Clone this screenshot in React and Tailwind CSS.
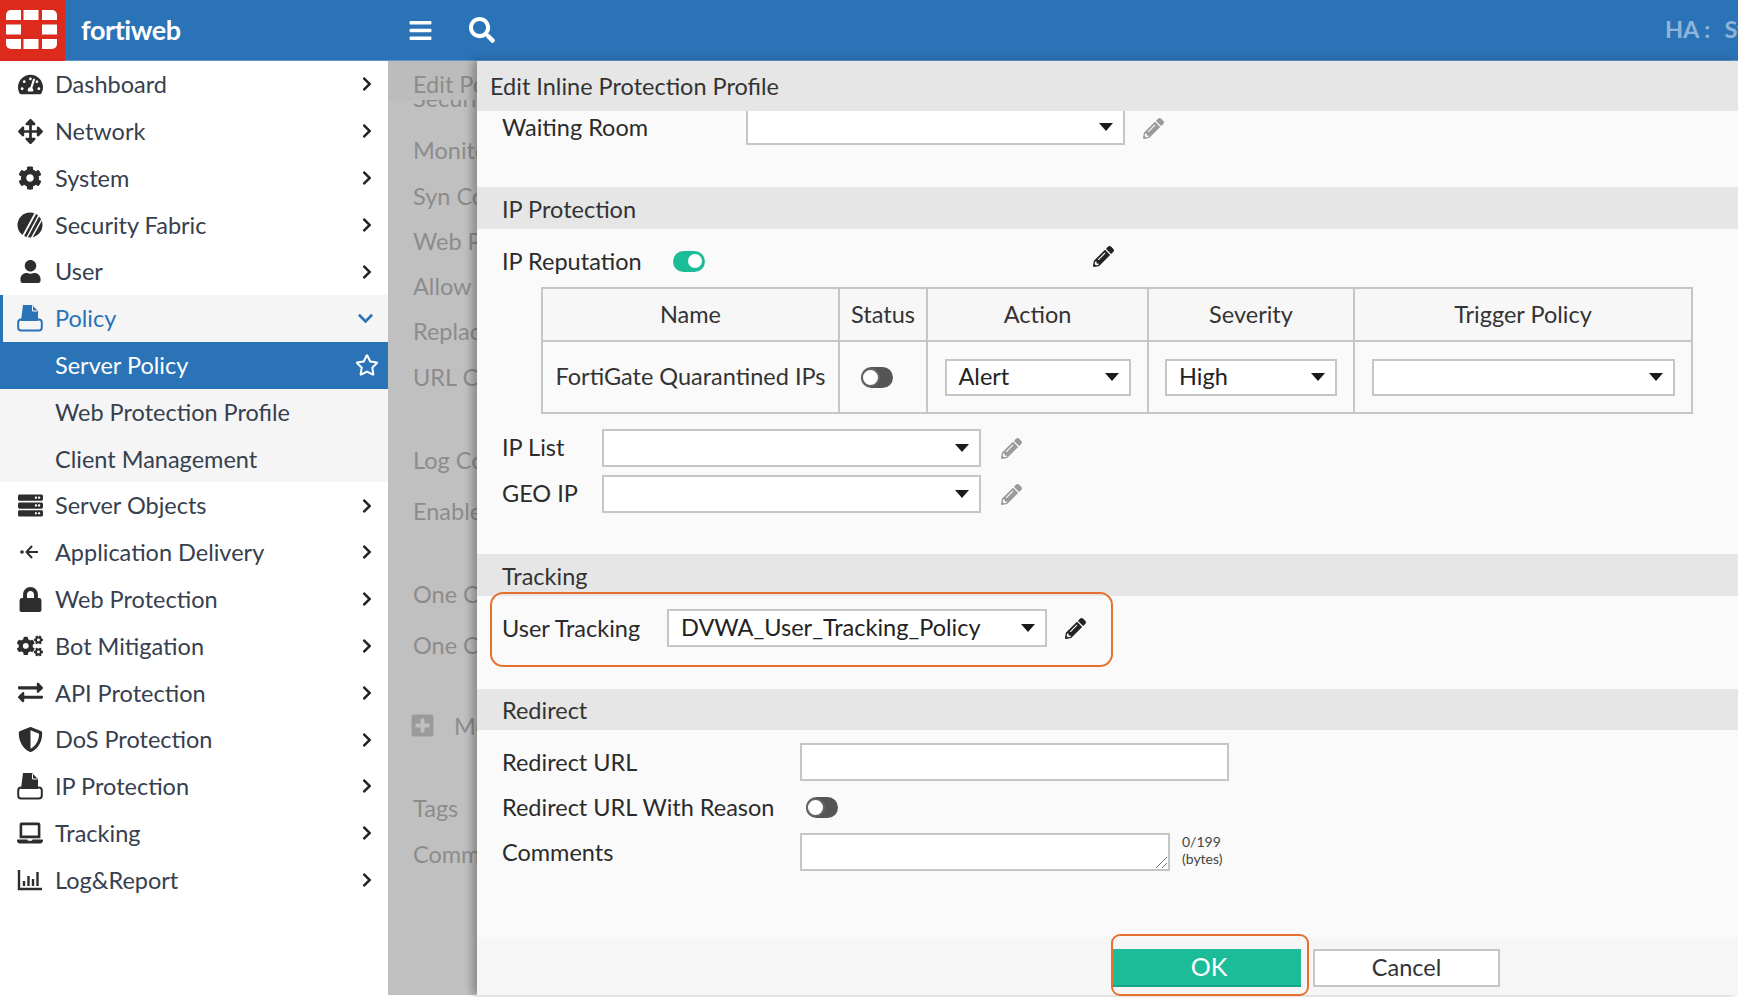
import React from "react";
import {
  FaTachometerAlt, FaArrowsAlt, FaCog, FaUser, FaServer, FaLock, FaCogs, FaExchangeAlt, FaShieldAlt, FaLaptop,
  FaChevronRight, FaChevronDown, FaRegStar, FaBars, FaSearch, FaPencilAlt, FaPlusSquare,
} from "react-icons/fa";

const Logo = () => (
  <svg width="65" height="61" viewBox="0 0 65 61" className="block">
    <path d="M11 10H21V20H6V15a5 5 0 0 1 5-5Z" fill="#fff" />
    <rect x="23.5" y="10" width="15" height="10" fill="#fff" />
    <path d="M42 10H52a5 5 0 0 1 5 5V20H42Z" fill="#fff" />
    <rect x="6" y="24.5" width="15" height="10" fill="#fff" />
    <rect x="42" y="24.5" width="15" height="10" fill="#fff" />
    <path d="M6 39H21V49H11a5 5 0 0 1-5-5Z" fill="#fff" />
    <rect x="23.5" y="39" width="15" height="10" fill="#fff" />
    <path d="M42 39H57V44a5 5 0 0 1-5 5H42Z" fill="#fff" />
  </svg>
);

const FabricIcon = () => (
  <svg width="26" height="26" viewBox="0 0 26 26">
    <circle cx="13" cy="13" r="12.500" fill="#2d2d2d" />
    <path d="M18.500 1 5.500 25" stroke="#fff" strokeWidth="1.800" fill="none" />
    <path d="M22 3 10 25.500" stroke="#fff" strokeWidth="1.500" fill="none" />
    <path d="M25 7 14.500 26" stroke="#fff" strokeWidth="1.500" fill="none" />
  </svg>
);

const PolicyIcon = ({ color }) => (
  <svg width="26" height="28" viewBox="0 0 26 28">
    <path d="M6 1H15L21 7V17H4Z" fill={color} />
    <path d="M15.500 2V7H20.500" stroke="#fff" strokeWidth="1" fill="none" />
    <rect x="1.200" y="15.500" width="23.600" height="11" rx="3" fill="none" stroke={color} strokeWidth="2" />
    <path d="M8 15.500H20" stroke={color} strokeWidth="3" />
  </svg>
);

const DeliveryIcon = () => (
  <svg width="26" height="20" viewBox="0 0 26 20">
    <circle cx="5" cy="10" r="1.800" fill="#2d2d2d" />
    <path d="M21 10H10M15 4 9.500 10l5.500 6" stroke="#2d2d2d" strokeWidth="2" fill="none" />
  </svg>
);

const LogIcon = () => (
  <svg width="26" height="24" viewBox="0 0 26 24">
    <path d="M2 2V21H25" stroke="#2d2d2d" strokeWidth="2.400" fill="none" />
    <path d="M7 18V13M11.500 18V8M16 18V11M20.500 18V4" stroke="#2d2d2d" strokeWidth="2.400" fill="none" />
  </svg>
);

const dark = "#2d2d2d";
const menuTop = [
  ["Dashboard", <FaTachometerAlt size={25} color={dark} />],
  ["Network", <FaArrowsAlt size={25} color={dark} />],
  ["System", <FaCog size={24} color={dark} />],
  ["Security Fabric", <FabricIcon />],
  ["User", <FaUser size={23} color={dark} />],
];
const menuBottom = [
  ["Server Objects", <FaServer size={25} color={dark} />],
  ["Application Delivery", <DeliveryIcon />],
  ["Web Protection", <FaLock size={25} color={dark} />],
  ["Bot Mitigation", <FaCogs size={26} color={dark} />],
  ["API Protection", <FaExchangeAlt size={25} color={dark} />],
  ["DoS Protection", <FaShieldAlt size={25} color={dark} />],
  ["IP Protection", <PolicyIcon color={dark} />],
  ["Tracking", <FaLaptop size={26} color={dark} />],
  ["Log&Report", <LogIcon />],
];

const MenuRow = ({ label, icon }) => (
  <div className="flex h-[46.8px] items-center text-[#36404e]">
    <span className="flex w-[55px] shrink-0 justify-center pl-[10px] pr-[5px]">{icon}</span>
    <span className="flex-1 pt-[1px]">{label}</span>
    <FaChevronRight size={16} color="#222" className="mr-[13px]" />
  </div>
);

const SubRow = ({ label }) => (
  <div className="flex h-[46.8px] items-center bg-[#f5f5f5] pt-[1px] pl-[55px] text-[#36404e]">{label}</div>
);

const Sidebar = () => (
  <aside className="w-[388px] shrink-0 bg-white">
    {menuTop.map(([l, i]) => <MenuRow key={l} label={l} icon={i} />)}
    <div className="flex h-[46.8px] items-center border-l-[3px] border-[#2a73b7] bg-[#f5f5f5] text-[#2a73b7]">
      <span className="flex w-[52px] shrink-0 justify-center pl-[7px] pr-[5px]"><PolicyIcon color="#2a73b7" /></span>
      <span className="flex-1 pt-[1px]">Policy</span>
      <FaChevronDown size={17} color="#2a73b7" className="mr-[14px]" />
    </div>
    <div className="flex h-[46.8px] items-center bg-[#2a73b7] pl-[55px] text-white">
      <span className="flex-1">Server Policy</span>
      <FaRegStar size={24} color="#fff" className="mr-[9px]" />
    </div>
    <SubRow label="Web Protection Profile" />
    <SubRow label="Client Management" />
    {menuBottom.map(([l, i]) => <MenuRow key={l} label={l} icon={i} />)}
  </aside>
);

const backdropRows = [
  ["Monitor Mode", "h-[46px]"],
  ["Syn Cookie", "h-[45px]"],
  ["Web Protection", "h-[45px]"],
  ["Allow Method", "h-[45px]"],
  ["Replacemsg", "h-[46px]"],
  ["URL Cache", "h-[83px]"],
  ["Log Cookie", "h-[51px]"],
  ["Enable", "h-[83px]"],
  ["One Click", "h-[51px]"],
  ["One Click", "h-[81px]"],
];

const Backdrop = () => (
  <div className="w-[89px] shrink-0 overflow-hidden bg-[#c0c0c0] pl-[25px] leading-[30px] whitespace-nowrap text-[#8c8c8c]">
    <div className="-ml-[25px] h-[39px] bg-[#bcbcbc] pt-[8px] pl-[25px]">Edit Policy</div>
    <div className="h-[10px] overflow-hidden"><div className="-mt-[17px]">Security</div></div>
    <div className="h-[25px]" />
    {backdropRows.map(([t, h], i) => <div key={i} className={h}>{t}</div>)}
    <div className="flex h-[82px] items-start gap-[19px]">
      <FaPlusSquare size={25} color="#9a9a9a" className="mt-[2px] -ml-[3px] shrink-0" />
      <span>Members</span>
    </div>
    <div className="h-[46px]">Tags</div>
    <div>Comments</div>
  </div>
);

const Select = ({ value, className }) => (
  <div className={`flex items-center justify-between bg-white pr-[10px] pl-[12px] text-[#222] ${className}`}>
    <span>{value}</span>
    <svg width="14" height="8" viewBox="0 0 14 8" className="shrink-0"><path d="M0 0H14L7 8Z" fill="#1a1a1a" /></svg>
  </div>
);

const Toggle = ({ on }) => on ? (
  <div className="flex h-[21px] w-[32px] items-center justify-end rounded-full bg-[#1dbc98] pr-[1px]">
    <div className="h-[18px] w-[18px] rounded-full border-2 border-[#1dbc98] bg-white" />
  </div>
) : (
  <div className="flex h-[21px] w-[32px] items-center justify-start rounded-full bg-[#555]">
    <div className="h-[19px] w-[19px] rounded-full border-2 border-[#666] bg-white" />
  </div>
);

const Section = ({ title, className }) => (
  <div className={`flex items-center bg-[#e6e6e6] pl-[25px] text-[#333] ${className}`}>{title}</div>
);

const box = "border-2 border-[#c6c6c6]";
const tdb = "border-2 border-[#c6c6c6] p-0";

const Table = () => (
  <table className="ml-[64px] w-[1150px] table-fixed border-collapse border-2 border-[#c6c6c6] text-[#333]">
    <colgroup>
      <col className="w-[297px]" />
      <col className="w-[88px]" />
      <col className="w-[221px]" />
      <col className="w-[206px]" />
      <col className="w-[338px]" />
    </colgroup>
    <thead>
      <tr className="h-[53px] bg-[#f7f7f7] text-center">
        <th className={`${tdb} font-normal`}>Name</th>
        <th className={`${tdb} font-normal`}>Status</th>
        <th className={`${tdb} font-normal`}>Action</th>
        <th className={`${tdb} font-normal`}>Severity</th>
        <th className={`${tdb} font-normal`}>Trigger Policy</th>
      </tr>
    </thead>
    <tbody>
      <tr className="h-[72px]">
        <td className={`${tdb} text-center whitespace-nowrap`}>FortiGate Quarantined IPs</td>
        <td className={tdb}><div className="flex justify-center pr-[13px]"><Toggle /></div></td>
        <td className={tdb}><div className="flex justify-center"><Select value="Alert" className={`h-[37px] w-[186px] ${box}`} /></div></td>
        <td className={tdb}><div className="flex justify-center"><Select value="High" className={`h-[37px] w-[172px] ${box}`} /></div></td>
        <td className={tdb}><div className="flex justify-center"><Select value="" className={`h-[37px] w-[303px] ${box}`} /></div></td>
      </tr>
    </tbody>
  </table>
);

const Pencil = ({ gray }) => <FaPencilAlt size={21} color={gray ? "#9a9a9a" : "#222"} />;

const Modal = () => (
  <div className="flex min-w-0 flex-1 flex-col bg-[#fafafa] text-[#2b2b2b] shadow-[-5px_0_8px_rgba(0,0,0,0.28)]">
    <div className="flex h-[50px] shrink-0 items-center bg-[#e6e6e6] pt-[2px] pl-[13px] text-[#333]">Edit Inline Protection Profile</div>
    <div className="flex h-[76px] items-start pl-[25px]">
      <span className="w-[244px] leading-[32px]">Waiting Room</span>
      <Select value="" className="h-[34px] w-[379px] border-x-2 border-b-2 border-[#c6c6c6]" />
      <span className="mt-[7px] ml-[18px]"><Pencil gray /></span>
    </div>
    <Section title="IP Protection" className="h-[42px] pt-[3px]" />
    <div className="flex h-[58px] items-center pt-[6px] pl-[25px]">
      <span className="w-[171px] pt-[1px]">IP Reputation</span>
      <Toggle on />
      <span className="-mt-[10px] ml-[388px]"><Pencil /></span>
    </div>
    <Table />
    <div className="mt-[15px] flex h-[38px] items-center pl-[25px]">
      <span className="w-[100px]">IP List</span>
      <Select value="" className={`h-[38px] w-[379px] ${box}`} />
      <span className="ml-[20px]"><Pencil gray /></span>
    </div>
    <div className="mt-[8px] flex h-[38px] items-center pl-[25px]">
      <span className="w-[100px]">GEO IP</span>
      <Select value="" className={`h-[38px] w-[379px] ${box}`} />
      <span className="ml-[20px]"><Pencil gray /></span>
    </div>
    <Section title="Tracking" className="mt-[41px] h-[42px] pt-[3px]" />
    <div className="relative flex h-[93px] items-start pt-[13px] pl-[25px]">
      <span className="w-[165px] leading-[38px]">User Tracking</span>
      <Select value="DVWA_User_Tracking_Policy" className={`h-[38px] w-[380px] ${box}`} />
      <span className="mt-[9px] ml-[18px]"><Pencil /></span>
      <div className="absolute top-[-4px] left-[13px] h-[75px] w-[623px] rounded-[13px] border-[2.5px] border-[#e8702f]" />
    </div>
    <Section title="Redirect" className="h-[41px] pt-[2px]" />
    <div className="mt-[13px] flex h-[38px] items-center pl-[25px]">
      <span className="w-[298px] pt-[2px]">Redirect URL</span>
      <div className={`h-[38px] w-[429px] bg-white ${box}`} />
    </div>
    <div className="mt-[8px] flex h-[37px] items-center pl-[25px]">
      <span className="w-[304px] whitespace-nowrap">Redirect URL With Reason</span>
      <Toggle />
    </div>
    <div className="mt-[7px] flex h-[38px] items-start pl-[25px]">
      <span className="w-[298px] leading-[38px]">Comments</span>
      <div className={`relative h-[38px] w-[370px] bg-white ${box}`}>
        <svg width="14" height="14" viewBox="0 0 14 14" className="absolute right-0 bottom-0">
          <path d="M2 13 13 2M8 13 13 8" stroke="#777" strokeWidth="1" fill="none" />
        </svg>
      </div>
      <div className="ml-[12px] text-[14px] leading-[17px] text-[#444]">0/199<br />(bytes)</div>
    </div>
    <div className="mt-auto h-[58px] shrink-0 bg-[#f6f6f6] pt-[12px] pl-[636px]">
      <div className="relative flex gap-[12px]">
        <div className="flex h-[38px] w-[188px] items-center justify-center border-b-2 border-[#17a585] bg-[#1dbc98] pl-[4px] text-[25px] text-white">OK</div>
        <div className={`flex h-[38px] w-[187px] items-center justify-center bg-white text-[#333] ${box}`}>Cancel</div>
        <div className="absolute top-[-15px] left-[-2px] h-[62px] w-[198px] rounded-[9px] border-[2.5px] border-[#e8702f]" />
      </div>
    </div>
  </div>
);

export default function App() {
  return (
    <div className="h-[997px] w-[1738px] overflow-hidden bg-white font-['Lato',sans-serif] text-[23.5px]">
      <header className="flex h-[61px] items-center border-b border-[#5c97cf] bg-[#2a73b7] text-white">
        <div className="h-[61px] w-[65px] shrink-0 bg-[#dc2b1c]"><Logo /></div>
        <span className="ml-[16px] w-[327px] text-[27px] font-bold tracking-[-0.4px]">fortiweb</span>
        <FaBars size={25} />
        <FaSearch size={26} className="ml-[36px]" />
        <span className="ml-auto flex w-[73px] gap-[14px] overflow-hidden font-bold whitespace-nowrap text-[#8fb4da]">
          <span>HA :</span>
          <span>Standalone</span>
        </span>
      </header>
      <div className="flex h-[934px]">
        <Sidebar />
        <Backdrop />
        <Modal />
      </div>
    </div>
  );
}
